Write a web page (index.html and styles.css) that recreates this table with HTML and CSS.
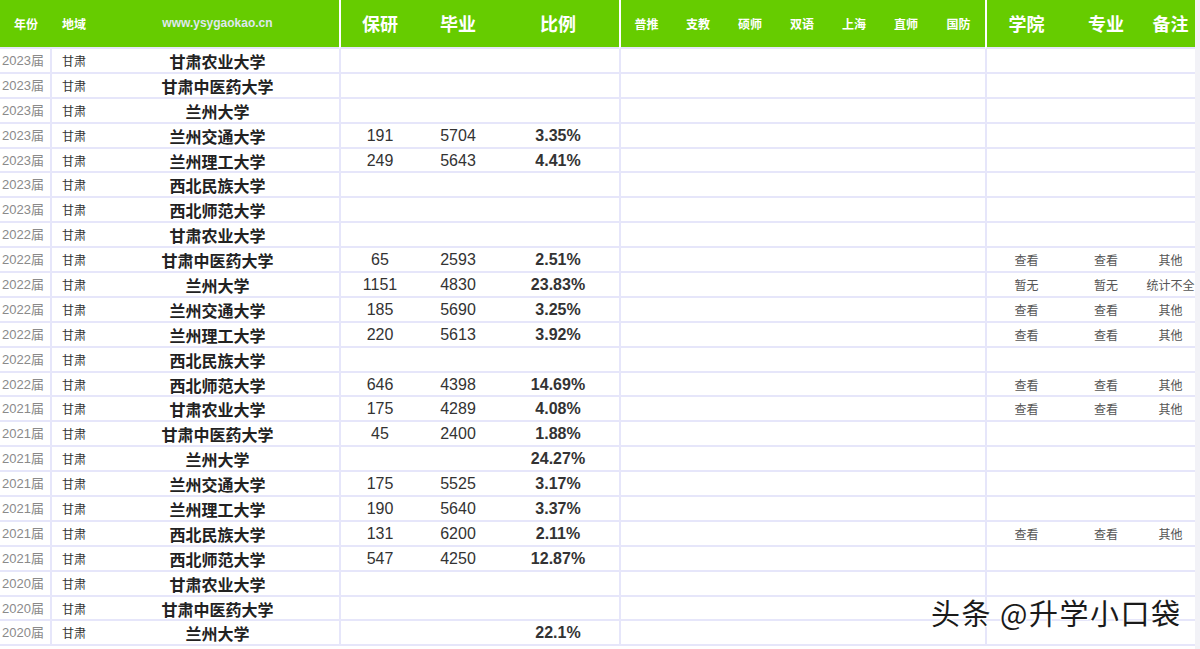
FILE: index.html
```html
<!DOCTYPE html>
<html lang="zh-CN">
<head>
<meta charset="utf-8">
<title>甘肃高校保研率</title>
<link rel="stylesheet" href="styles.css">
</head>
<body>
<div class="page">
<div class="sheet">
<table class="grid">
  <thead>
    <tr>
      <th class="c-year sm">年份</th>
      <th class="c-region sm">地域</th>
      <th class="c-school site">www.ysygaokao.cn</th>
      <th class="c-by big sec">保研</th>
      <th class="c-by2 big">毕业</th>
      <th class="c-ratio big">比例</th>
      <th class="c-p1 sm sec">普推</th>
      <th class="c-p sm">支教</th>
      <th class="c-p sm">硕师</th>
      <th class="c-p sm">双语</th>
      <th class="c-p sm">上海</th>
      <th class="c-p sm">直师</th>
      <th class="c-p1 sm">国防</th>
      <th class="c-xy big sec">学院</th>
      <th class="c-zy big">专业</th>
      <th class="c-bz big">备注</th>
    </tr>
  </thead>
  <tbody>
    <tr><td class="yr">2023届</td><td class="rg">甘肃</td><td class="sc">甘肃农业大学</td><td class="sec"></td><td></td><td></td><td class="sec"></td><td></td><td></td><td></td><td></td><td></td><td></td><td class="sec"></td><td></td><td></td></tr>
    <tr><td class="yr">2023届</td><td class="rg">甘肃</td><td class="sc">甘肃中医药大学</td><td class="sec"></td><td></td><td></td><td class="sec"></td><td></td><td></td><td></td><td></td><td></td><td></td><td class="sec"></td><td></td><td></td></tr>
    <tr><td class="yr">2023届</td><td class="rg">甘肃</td><td class="sc">兰州大学</td><td class="sec"></td><td></td><td></td><td class="sec"></td><td></td><td></td><td></td><td></td><td></td><td></td><td class="sec"></td><td></td><td></td></tr>
    <tr><td class="yr">2023届</td><td class="rg">甘肃</td><td class="sc">兰州交通大学</td><td class="sec num">191</td><td class="num">5704</td><td class="pct">3.35%</td><td class="sec"></td><td></td><td></td><td></td><td></td><td></td><td></td><td class="sec"></td><td></td><td></td></tr>
    <tr><td class="yr">2023届</td><td class="rg">甘肃</td><td class="sc">兰州理工大学</td><td class="sec num">249</td><td class="num">5643</td><td class="pct">4.41%</td><td class="sec"></td><td></td><td></td><td></td><td></td><td></td><td></td><td class="sec"></td><td></td><td></td></tr>
    <tr><td class="yr">2023届</td><td class="rg">甘肃</td><td class="sc">西北民族大学</td><td class="sec"></td><td></td><td></td><td class="sec"></td><td></td><td></td><td></td><td></td><td></td><td></td><td class="sec"></td><td></td><td></td></tr>
    <tr><td class="yr">2023届</td><td class="rg">甘肃</td><td class="sc">西北师范大学</td><td class="sec"></td><td></td><td></td><td class="sec"></td><td></td><td></td><td></td><td></td><td></td><td></td><td class="sec"></td><td></td><td></td></tr>
    <tr><td class="yr">2022届</td><td class="rg">甘肃</td><td class="sc">甘肃农业大学</td><td class="sec"></td><td></td><td></td><td class="sec"></td><td></td><td></td><td></td><td></td><td></td><td></td><td class="sec"></td><td></td><td></td></tr>
    <tr><td class="yr">2022届</td><td class="rg">甘肃</td><td class="sc">甘肃中医药大学</td><td class="sec num">65</td><td class="num">2593</td><td class="pct">2.51%</td><td class="sec"></td><td></td><td></td><td></td><td></td><td></td><td></td><td class="sec lk">查看</td><td class="lk">查看</td><td class="lk">其他</td></tr>
    <tr><td class="yr">2022届</td><td class="rg">甘肃</td><td class="sc">兰州大学</td><td class="sec num">1151</td><td class="num">4830</td><td class="pct">23.83%</td><td class="sec"></td><td></td><td></td><td></td><td></td><td></td><td></td><td class="sec lk">暂无</td><td class="lk">暂无</td><td class="lk">统计不全</td></tr>
    <tr><td class="yr">2022届</td><td class="rg">甘肃</td><td class="sc">兰州交通大学</td><td class="sec num">185</td><td class="num">5690</td><td class="pct">3.25%</td><td class="sec"></td><td></td><td></td><td></td><td></td><td></td><td></td><td class="sec lk">查看</td><td class="lk">查看</td><td class="lk">其他</td></tr>
    <tr><td class="yr">2022届</td><td class="rg">甘肃</td><td class="sc">兰州理工大学</td><td class="sec num">220</td><td class="num">5613</td><td class="pct">3.92%</td><td class="sec"></td><td></td><td></td><td></td><td></td><td></td><td></td><td class="sec lk">查看</td><td class="lk">查看</td><td class="lk">其他</td></tr>
    <tr><td class="yr">2022届</td><td class="rg">甘肃</td><td class="sc">西北民族大学</td><td class="sec"></td><td></td><td></td><td class="sec"></td><td></td><td></td><td></td><td></td><td></td><td></td><td class="sec"></td><td></td><td></td></tr>
    <tr><td class="yr">2022届</td><td class="rg">甘肃</td><td class="sc">西北师范大学</td><td class="sec num">646</td><td class="num">4398</td><td class="pct">14.69%</td><td class="sec"></td><td></td><td></td><td></td><td></td><td></td><td></td><td class="sec lk">查看</td><td class="lk">查看</td><td class="lk">其他</td></tr>
    <tr><td class="yr">2021届</td><td class="rg">甘肃</td><td class="sc">甘肃农业大学</td><td class="sec num">175</td><td class="num">4289</td><td class="pct">4.08%</td><td class="sec"></td><td></td><td></td><td></td><td></td><td></td><td></td><td class="sec lk">查看</td><td class="lk">查看</td><td class="lk">其他</td></tr>
    <tr><td class="yr">2021届</td><td class="rg">甘肃</td><td class="sc">甘肃中医药大学</td><td class="sec num">45</td><td class="num">2400</td><td class="pct">1.88%</td><td class="sec"></td><td></td><td></td><td></td><td></td><td></td><td></td><td class="sec"></td><td></td><td></td></tr>
    <tr><td class="yr">2021届</td><td class="rg">甘肃</td><td class="sc">兰州大学</td><td class="sec num"></td><td class="num"></td><td class="pct">24.27%</td><td class="sec"></td><td></td><td></td><td></td><td></td><td></td><td></td><td class="sec"></td><td></td><td></td></tr>
    <tr><td class="yr">2021届</td><td class="rg">甘肃</td><td class="sc">兰州交通大学</td><td class="sec num">175</td><td class="num">5525</td><td class="pct">3.17%</td><td class="sec"></td><td></td><td></td><td></td><td></td><td></td><td></td><td class="sec"></td><td></td><td></td></tr>
    <tr><td class="yr">2021届</td><td class="rg">甘肃</td><td class="sc">兰州理工大学</td><td class="sec num">190</td><td class="num">5640</td><td class="pct">3.37%</td><td class="sec"></td><td></td><td></td><td></td><td></td><td></td><td></td><td class="sec"></td><td></td><td></td></tr>
    <tr><td class="yr">2021届</td><td class="rg">甘肃</td><td class="sc">西北民族大学</td><td class="sec num">131</td><td class="num">6200</td><td class="pct">2.11%</td><td class="sec"></td><td></td><td></td><td></td><td></td><td></td><td></td><td class="sec lk">查看</td><td class="lk">查看</td><td class="lk">其他</td></tr>
    <tr><td class="yr">2021届</td><td class="rg">甘肃</td><td class="sc">西北师范大学</td><td class="sec num">547</td><td class="num">4250</td><td class="pct">12.87%</td><td class="sec"></td><td></td><td></td><td></td><td></td><td></td><td></td><td class="sec"></td><td></td><td></td></tr>
    <tr><td class="yr">2020届</td><td class="rg">甘肃</td><td class="sc">甘肃农业大学</td><td class="sec"></td><td></td><td></td><td class="sec"></td><td></td><td></td><td></td><td></td><td></td><td></td><td class="sec"></td><td></td><td></td></tr>
    <tr><td class="yr">2020届</td><td class="rg">甘肃</td><td class="sc">甘肃中医药大学</td><td class="sec"></td><td></td><td></td><td class="sec"></td><td></td><td></td><td></td><td></td><td></td><td></td><td class="sec"></td><td></td><td></td></tr>
    <tr><td class="yr">2020届</td><td class="rg">甘肃</td><td class="sc">兰州大学</td><td class="sec num"></td><td class="num"></td><td class="pct">22.1%</td><td class="sec"></td><td></td><td></td><td></td><td></td><td></td><td></td><td class="sec"></td><td></td><td></td></tr>
  </tbody>
</table>
</div>
<div class="watermark">头条 @升学小口袋</div>
</div>
</body>
</html>
```

FILE: styles.css
```css
* { box-sizing: border-box; }
html, body {
  margin: 0;
  padding: 0;
  background: #f2f2f7;
}
.page {
  position: relative;
  width: 1200px;
  height: 649px;
  overflow: hidden;
}
.sheet {
  width: 1195px;
  height: 649px;
  background: #ffffff;
}
.grid {
  width: 1195px;
  table-layout: fixed;
  border-collapse: separate;
  border-spacing: 0;
  background: #ffffff;
  font-family: "Liberation Sans", Arial, "Noto Sans CJK SC", sans-serif;
}
.grid th {
  height: 49px;
  padding: 0 0 1px 0;
  background: #66cc00;
  color: #ffffff;
  font-family: "Noto Sans CJK SC", "Liberation Sans", sans-serif;
  font-weight: 700;
  text-align: center;
  vertical-align: middle;
  border-bottom: 2px solid #e6e6fa;
  white-space: nowrap;
}
.grid th.sec { border-left: 2px solid #ffffff; }
.grid th.sm { font-size: 12px; }
.grid th.big { font-size: 18px; }
.grid th.site {
  font-family: "Liberation Sans", Arial, sans-serif;
  font-size: 12px;
  color: #dfe8ee;
}
.c-year { width: 52px; }
.c-region { width: 44px; }
.c-school { width: 243px; }
.c-by { width: 80px; }
.c-by2 { width: 78px; }
.c-ratio { width: 122px; }
.c-p1 { width: 53px; }
.c-p { width: 52px; }
.c-xy { width: 81px; }
.c-zy { width: 80px; }
.c-bz { width: 49px; }

.grid td {
  height: 24.9px;
  padding: 1px 0 0 0;
  text-align: center;
  vertical-align: middle;
  border-bottom: 2px solid #e6e6fa;
  white-space: nowrap;
  overflow: hidden;
  line-height: 16px;
}
.grid td.sec { border-left: 2px solid #e6e6fa; }
.grid td.yr {
  text-align: left;
  padding-left: 2px;
  font-size: 13px;
  color: #8a8a8a;
  border-right: 2px solid #e6e6fa;
}
.grid td.rg {
  font-family: "Noto Sans CJK SC", sans-serif;
  font-size: 12px;
  color: #333333;
}
.grid td.sc {
  font-family: "Noto Sans CJK SC", sans-serif;
  font-size: 16px;
  font-weight: 700;
  color: #222222;
}
.grid td.num {
  font-size: 16px;
  color: #333333;
}
.grid td.pct {
  font-size: 16px;
  font-weight: 700;
  color: #333333;
}
.grid td.lk {
  font-family: "Noto Sans CJK SC", sans-serif;
  font-size: 12px;
  color: #555555;
}
.watermark {
  position: absolute;
  left: 931px;
  top: 591px;
  font-family: "Noto Sans CJK SC", sans-serif;
  font-size: 29px;
  letter-spacing: 1.5px;
  color: #1a1a1a;
  text-shadow: 1px 1px 0 #ffffff, -1px -1px 0 #ffffff, 1px -1px 0 #ffffff, -1px 1px 0 #ffffff;
  white-space: nowrap;
}
```
